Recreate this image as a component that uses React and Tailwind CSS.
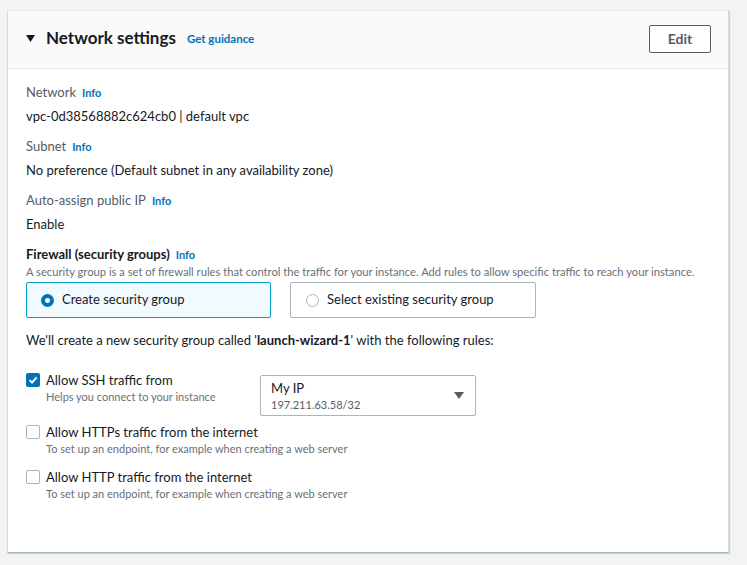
import React, { useState } from 'react';

const Info = () => (
  <span className="ml-[6px] text-[11px] font-bold text-[#0073bb]">Info</span>
);

const Checkbox = ({ checked }) =>
  checked ? (
    <span className="flex h-[14px] w-[14px] shrink-0 items-center justify-center rounded-[2px] bg-[#0073bb]">
      <svg width="10" height="10" viewBox="0 0 10 10" fill="none">
        <path d="M1.5 5.2 L4 7.6 L8.6 2.4" stroke="#fff" strokeWidth="1.8" />
      </svg>
    </span>
  ) : (
    <span className="block h-[14px] w-[14px] shrink-0 rounded-[2px] border border-[#aab7b8] bg-white" />
  );

const Rule = ({ checked, title, hint, className, children }) => (
  <div className={`flex items-start ${className || ''}`}>
    <div className="flex w-[234px] shrink-0 items-start">
      <div className="mt-[2px]">
        <Checkbox checked={checked} />
      </div>
      <div className="ml-[6px] whitespace-nowrap">
        <div className="text-[13px] leading-[18px] text-[#16191f]">{title}</div>
        <div className="text-[11px] leading-[16px] text-[#687078]">{hint}</div>
      </div>
    </div>
    {children}
  </div>
);

export default function App() {
  const [mode, setMode] = useState('create');

  return (
    <div className="min-h-screen bg-[#f2f3f3] pt-[10px] pl-[7px] font-['Lato',sans-serif]">
      <div className="w-[722px] border border-t-[#eaeded] border-r-[#d5dbdb] border-b-[#aab7b8] border-l-[#d5dbdb] bg-white shadow-[1px_1px_1px_rgba(0,28,36,0.15)]">
        <div className="flex h-[58px] items-center justify-between border-b border-[#eaeded] bg-[#fafafa] pb-[3px] pl-[18px] pr-[17px]">
          <div className="flex items-center">
            <svg width="9" height="7" viewBox="0 0 9 7" className="mr-[11px] mt-[1px]">
              <path d="M0 0 H9 L4.5 7 Z" fill="#16191f" />
            </svg>
            <h2 className="text-[17px] font-bold text-[#16191f]">Network settings</h2>
            <span className="ml-[11px] mt-[1px] text-[11.5px] font-bold text-[#0073bb]">Get guidance</span>
          </div>
          <button className="mt-[1px] h-[28px] w-[62px] rounded-[2px] border border-[#545b64] bg-white text-[14px] font-bold text-[#545b64]">
            Edit
          </button>
        </div>

        <div className="px-[18px] pt-[13px] pb-[50px] text-[13px] text-[#16191f]">
          <div className="leading-[20px] text-[#545b64]">
            Network<Info />
          </div>
          <div className="mt-[3px] leading-[20px]">vpc-0d38568882c624cb0 | default vpc</div>

          <div className="mt-[10px] leading-[20px] text-[#545b64]">
            Subnet<Info />
          </div>
          <div className="mt-[3px] leading-[20px]">No preference (Default subnet in any availability zone)</div>

          <div className="mt-[10px] leading-[20px] text-[#545b64]">
            Auto-assign public IP<Info />
          </div>
          <div className="mt-[3px] leading-[20px]">Enable</div>

          <div className="mt-[10px] font-bold leading-[20px]">
            Firewall (security groups)<Info />
          </div>
          <div className="whitespace-nowrap text-[11.2px] leading-[14px] text-[#687078]">
            A security group is a set of firewall rules that control the traffic for your instance. Add rules to allow specific traffic to reach your instance.
          </div>

          <div className="mt-[3px] flex gap-[19px]">
            <button
              onClick={() => setMode('create')}
              className={
                mode === 'create'
                  ? 'flex h-[36px] w-[245px] items-center rounded-[2px] border border-[#00a1c9] bg-[#f1faff] px-[14px]'
                  : 'flex h-[36px] w-[245px] items-center rounded-[2px] border border-[#aab7b8] bg-white px-[14px]'
              }
            >
              <span
                className={
                  mode === 'create'
                    ? 'h-[13px] w-[13px] rounded-full border-[4px] border-[#0073bb] bg-white'
                    : 'h-[13px] w-[13px] rounded-full border border-[#aab7b8] bg-white'
                }
              />
              <span className="ml-[8px] text-[13px]">Create security group</span>
            </button>
            <button
              onClick={() => setMode('select')}
              className={
                mode === 'select'
                  ? 'flex h-[36px] w-[246px] items-center rounded-[2px] border border-[#00a1c9] bg-[#f1faff] px-[15px]'
                  : 'flex h-[36px] w-[246px] items-center rounded-[2px] border border-[#aab7b8] bg-white px-[15px]'
              }
            >
              <span
                className={
                  mode === 'select'
                    ? 'h-[13px] w-[13px] rounded-full border-[4px] border-[#0073bb] bg-white'
                    : 'h-[13px] w-[13px] rounded-full border border-[#aab7b8] bg-white'
                }
              />
              <span className="ml-[8px] text-[13px]">Select existing security group</span>
            </button>
          </div>

          <div className="mt-[12px] leading-[20px]">
            We'll create a new security group called '<b>launch-wizard-1</b>' with the following rules:
          </div>

          <Rule className="mt-[21px]" checked title="Allow SSH traffic from" hint="Helps you connect to your instance">
            <div className="mt-[4px] -mb-[11px] flex h-[41px] w-[216px] items-center justify-between rounded-[2px] border border-[#aab7b8] pl-[10px] pr-[11px]">
              <div>
                <div className="text-[13px] leading-[17px]">My IP</div>
                <div className="text-[11px] leading-[15px] text-[#545b64]">197.211.63.58/32</div>
              </div>
              <svg width="10" height="7" viewBox="0 0 10 7">
                <path d="M0 0 H10 L5 7 Z" fill="#545b64" />
              </svg>
            </div>
          </Rule>
          <Rule
            className="mt-[18px]"
            title="Allow HTTPs traffic from the internet"
            hint="To set up an endpoint, for example when creating a web server"
          />
          <Rule
            className="mt-[11px]"
            title="Allow HTTP traffic from the internet"
            hint="To set up an endpoint, for example when creating a web server"
          />
        </div>
      </div>
    </div>
  );
}
